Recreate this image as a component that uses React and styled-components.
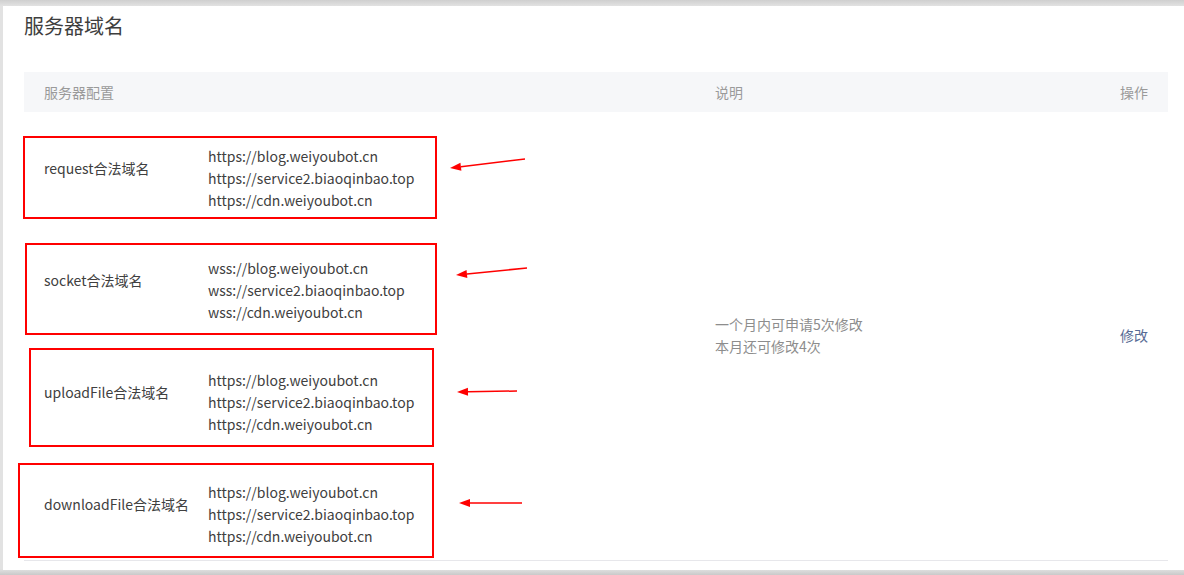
import React from "react";
import styled, { createGlobalStyle } from "styled-components";

const GlobalStyle = createGlobalStyle`
  html, body {
    margin: 0;
    padding: 0;
    background: #d9d9d9;
    font-family: "Noto Sans CJK SC", "Noto Sans", sans-serif;
  }
`;

const Page = styled.div`
  position: relative;
  width: 1184px;
  height: 575px;
  padding: 6px 0 5px 3px;
  box-sizing: border-box;
  background: linear-gradient(#cfcfcf, #e2e2e2 6px, #e2e2e2 569px, #c9c9c9);
`;

const Panel = styled.div`
  background: #fff;
  height: 100%;
  padding: 0 16px 0 21px;
  box-sizing: border-box;
`;

const Title = styled.h2`
  margin: 0;
  padding-top: 6px;
  height: 66px;
  box-sizing: border-box;
  font-size: 20px;
  font-weight: 400;
  line-height: 28px;
  color: #3e3e3e;
`;

const Table = styled.div`
  display: grid;
  grid-template-columns: 184px 487px 1fr auto;
  grid-template-rows: 40px repeat(4, 112px);
  border-bottom: 1px solid #e7e7eb;
  font-size: 14px;
  color: #404040;
`;

const HeadCell = styled.div`
  background: #f6f7f9;
  color: #9a9a9a;
  display: flex;
  align-items: center;
  padding: ${(p) => (p.$first ? "0 0 0 20px" : p.$last ? "0 20px 0 0" : p.$desc ? "0 0 0 20px" : "0")};
  justify-content: ${(p) => (p.$last ? "flex-end" : "flex-start")};
`;

const Label = styled.div`
  display: flex;
  align-items: center;
  padding-left: 20px;
  padding-bottom: 1px;
  white-space: nowrap;
`;

const Urls = styled.div`
  display: flex;
  flex-direction: column;
  justify-content: center;
  padding-top: 20px;
  line-height: 22px;
`;

const Desc = styled.div`
  grid-column: 3;
  grid-row: 2 / span 4;
  display: flex;
  flex-direction: column;
  justify-content: center;
  padding-left: 20px;
  padding-bottom: 2px;
  line-height: 22px;
  color: #8d8d8d;
`;

const Action = styled.a`
  grid-column: 4;
  grid-row: 2 / span 4;
  align-self: center;
  padding-right: 20px;
  padding-bottom: 2px;
  color: #576b95;
  text-decoration: none;
  cursor: pointer;
`;

const Mark = styled.div`
  position: absolute;
  border: 2px solid #ff0000;
  box-sizing: border-box;
  pointer-events: none;
`;

const Arrows = styled.svg`
  position: absolute;
  left: 0;
  top: 0;
  pointer-events: none;
`;

const rows = [
  { name: "request合法域名", scheme: "https" },
  { name: "socket合法域名", scheme: "wss" },
  { name: "uploadFile合法域名", scheme: "https" },
  { name: "downloadFile合法域名", scheme: "https" },
];

const hosts = ["blog.weiyoubot.cn", "service2.biaoqinbao.top", "cdn.weiyoubot.cn"];

const marks = [
  { left: 23, top: 136, right: 437, bottom: 219 },
  { left: 25, top: 243, right: 437, bottom: 335 },
  { left: 29, top: 348, right: 434, bottom: 447 },
  { left: 18, top: 463, right: 434, bottom: 558 },
];

const arrows = [
  [525, 159, 450, 168],
  [527, 268, 456, 275],
  [517, 391, 457, 392],
  [522, 503, 459, 503],
];

const Arrow = ({ x1, y1, x2, y2 }) => {
  const a = Math.atan2(y2 - y1, x2 - x1);
  const len = 11;
  const w = 4;
  const bx = x2 - Math.cos(a) * len;
  const by = y2 - Math.sin(a) * len;
  const px = -Math.sin(a) * w;
  const py = Math.cos(a) * w;
  return (
    <g>
      <line x1={x1} y1={y1} x2={bx} y2={by} stroke="#ff0000" strokeWidth="1.5" />
      <polygon
        points={`${x2},${y2} ${bx + px},${by + py} ${bx - px},${by - py}`}
        fill="#ff0000"
      />
    </g>
  );
};

export default function App() {
  return (
    <Page>
      <GlobalStyle />
      <Panel>
        <Title>服务器域名</Title>
        <Table>
          <HeadCell $first>服务器配置</HeadCell>
          <HeadCell />
          <HeadCell $desc>说明</HeadCell>
          <HeadCell $last>操作</HeadCell>
          {rows.map((r, i) => (
            <React.Fragment key={r.name}>
              <Label style={{ gridRow: i + 2, gridColumn: 1 }}>{r.name}</Label>
              <Urls style={{ gridRow: i + 2, gridColumn: 2 }}>
                {hosts.map((h) => (
                  <span key={h}>{`${r.scheme}://${h}`}</span>
                ))}
              </Urls>
            </React.Fragment>
          ))}
          <Desc>
            <span>一个月内可申请5次修改</span>
            <span>本月还可修改4次</span>
          </Desc>
          <Action>修改</Action>
        </Table>
      </Panel>
      {marks.map((m, i) => (
        <Mark
          key={i}
          style={{ left: m.left, top: m.top, width: m.right - m.left, height: m.bottom - m.top }}
        />
      ))}
      <Arrows width="1184" height="575">
        {arrows.map(([x1, y1, x2, y2], i) => (
          <Arrow key={i} x1={x1} y1={y1} x2={x2} y2={y2} />
        ))}
      </Arrows>
    </Page>
  );
}
